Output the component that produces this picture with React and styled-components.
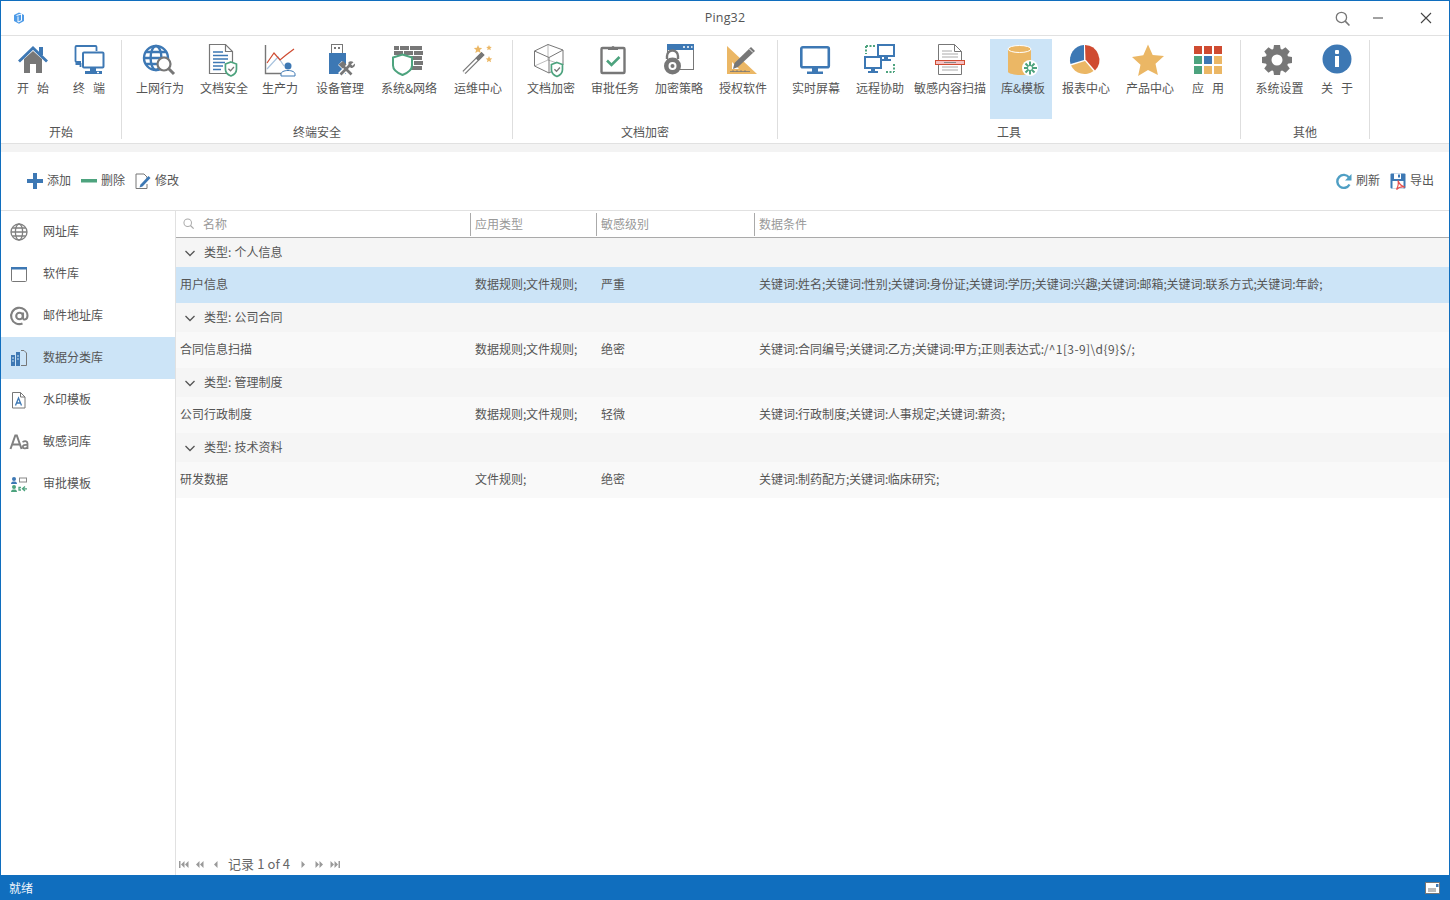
import React from 'react';
import styled, { createGlobalStyle } from 'styled-components';

const BLUE = '#3d78b4', GRAY = '#777', GREEN = '#4da37e', ORANGE = '#ebb765', RED = '#cf4b31';

const Global = createGlobalStyle`
  html, body { margin: 0; padding: 0; background: #fff; }
  body { font-family: "Noto Sans CJK SC", "Liberation Sans", sans-serif; font-size: 12px; color: #555; }
  * { box-sizing: border-box; }
`;

const Win = styled.div`
  width: 1450px; height: 900px; display: flex; flex-direction: column;
  border: 1px solid #106ebe; border-bottom: 0; overflow: hidden; background: #fff;
`;
const TitleBar = styled.header`
  height: 35px; flex: none; display: flex; align-items: center; position: relative;
  border-bottom: 1px solid #e1e1e1; padding-left: 12px;
`;
const Title = styled.div`
  position: absolute; left: 0; right: 0; top: 8px; text-align: center; font-family: "Open Sans", sans-serif;
  font-size: 12.5px; line-height: 17px; color: #555; letter-spacing: .2px;
`;
const WinControls = styled.div`
  margin-left: auto; display: flex; align-items: center; height: 100%;
`;
const WinBtn = styled.button`
  border: 0; background: none; padding: 0; display: flex; align-items: center; justify-content: center;
  width: ${p => p.$w}px; height: 34px; margin-right: ${p => p.$mr}px;
`;
const Ribbon = styled.nav`
  height: 108px; flex: none; display: flex; padding-top: 4px; border-bottom: 1px solid #e1e1e1;
`;
const Group = styled.section`
  width: ${p => p.$w}px; height: 99px; flex: none; display: flex; flex-direction: column;
  border-right: 1px solid #dedede;
`;
const GroupRow = styled.div`
  display: flex; height: 80px; margin-top: -1px; padding-left: ${p => p.$pad}px;
`;
const GroupLabel = styled.div`
  text-align: center; line-height: 16px; margin-top: 5px; color: #555;
`;
const RBtn = styled.button`
  width: ${p => p.$w}px; height: 80px; flex: none; border: 0; padding: 5px 0 0 ${p => p.$pl || 0}px;
  margin-left: ${p => p.$ml || 0}px; background: ${p => (p.$active ? '#cce4f7' : 'transparent')};
  display: flex; flex-direction: column; align-items: center; font: inherit; color: #555;
`;
const RText = styled.span`
  margin-top: 4px; line-height: 16px; white-space: pre;
`;
const Strip = styled.div`
  height: 8px; flex: none; background: #f3f3f3;
`;
const Toolbar = styled.div`
  height: 59px; flex: none; display: flex; align-items: center; padding: 0 15px 0 26px;
  border-bottom: 1px solid #e1e1e1;
`;
const TBtn = styled.button`
  display: flex; align-items: center; gap: 4px; border: 0; background: none; padding: 0; font: inherit; color: #555;
  margin-right: ${p => p.$mr || 0}px; margin-left: ${p => p.$ml || 0};
`;
const TLabel = styled.span`
  margin-top: -3px;
`;
const Main = styled.div`
  flex: 1; display: flex; min-height: 0;
`;
const Side = styled.aside`
  width: 175px; flex: none; border-right: 1px solid #e1e1e1;
`;
const SideItem = styled.div`
  height: 42px; display: flex; align-items: center; background: ${p => (p.$active ? '#cce4f7' : 'transparent')};
`;
const SideIcon = styled.span`
  width: 42px; flex: none; display: flex; justify-content: center; padding-right: 6px;
`;
const SideText = styled.span`
  margin-top: -3px;
`;
const Content = styled.main`
  flex: 1; display: flex; flex-direction: column; min-width: 0;
`;
const cols = 'grid-template-columns: 295px 126px 158px 1fr;';
const Header = styled.div`
  display: grid; ${cols} height: 27px; flex: none; border-bottom: 1px solid #aaa; align-items: center;
`;
const HCell = styled.div`
  height: 23px; display: flex; align-items: center; color: #999; padding-left: ${p => p.$pl || 4}px; gap: 9px;
  border-right: ${p => (p.$last ? 0 : '1px solid #aaa')}; padding-bottom: 2px;
`;
const GroupRowT = styled.div`
  height: 29px; background: #f5f5f5; display: flex; align-items: center; padding-left: 9px; gap: 9px; color: #555;
`;
const GroupText = styled.span`
  margin-top: -2px; word-spacing: .5px;
`;
const Row = styled.div`
  display: grid; ${cols} height: 36px; align-items: center; background: ${p => (p.$sel ? '#cce4f7' : '#f9f9f9')};
`;
const Cell = styled.div`
  padding: 0 0 3px 4px; white-space: nowrap; color: #555;
`;
const Punct = styled.span`
  letter-spacing: -.4px;
`;
const Regex = styled.span`
  letter-spacing: .4px;
`;
const Pager = styled.div`
  margin-top: auto; height: 22px; display: flex; align-items: center; padding-left: 3px; color: #666; flex: none;
  font-size: 13px;
`;
const PagerText = styled.span`
  margin: -2px 11px 0 10px; letter-spacing: .1px;
`;
const PagerGap = styled.span`
  width: ${p => p.$w}px; display: inline-block;
`;
const Status = styled.footer`
  height: 25px; flex: none; background: #106ebe; color: #f2f6fb; display: flex; align-items: center;
  justify-content: space-between; padding: 0 10px 0 9px; margin: 0 -1px;
`;
const StatusText = styled.span`
  margin-top: -1px;
`;
const Svg = styled.svg`
  display: block; flex: none; margin-left: ${p => p.$dx || 0}px; overflow: visible;
`;

const I = ({ s = 32, vb, dx, children }) => (
  <Svg width={s} height={s} viewBox={vb || `0 0 ${s} ${s}`} $dx={dx}>{children}</Svg>
);

const Shield = ({ x, y, k = 1, filled = true }) => (
  <g transform={`translate(${x} ${y}) scale(${k})`}>
    <path d="M7 0.5 13.5 3v6c0 4-3 6.5-6.500 8C3.500 15.500.5 13 .5 9V3z" fill="#fff" stroke={GREEN} strokeWidth="2" />
    {filled && <path d="M4 8.500 6.500 11 10.500 6.500" fill="none" stroke={GRAY} strokeWidth="1.600" />}
  </g>
);

const Globe = ({ c = BLUE, r = 12, cx = 12, cy = 14, w = 2.4 }) => (
  <g fill="none" stroke={c} strokeWidth={w}>
    <circle cx={cx} cy={cy} r={r} />
    <ellipse cx={cx} cy={cy} rx={r * 0.45} ry={r} />
    <path d={`M${cx - r} ${cy}H${cx + r}M${cx - r * 0.85} ${cy - r * 0.5}H${cx + r * 0.85}M${cx - r * 0.85} ${cy + r * 0.5}H${cx + r * 0.85}`} />
  </g>
);

const Gear = () => {
  const teeth = [0, 45, 90, 135, 180, 225, 270, 315];
  return (
    <I dx={-6}>
      {teeth.map(a => (
        <path key={a} d="M13 1h6l1 6h-8z" fill={GRAY} transform={`rotate(${a} 16 16)`} />
      ))}
      <circle cx="16" cy="16" r="8.500" fill="none" stroke={GRAY} strokeWidth="6" />
    </I>
  );
};

const icons = {
  home: (
    <I>
      <path d="M7 15 16 7l9 8v14h-6v-9h-6v9H7z" fill={GRAY} />
      <path d="M2 17.500 16 4l14 13.500" fill="none" stroke={BLUE} strokeWidth="2.800" />
      <rect x="22" y="3" width="4" height="8" fill={BLUE} />
    </I>
  ),
  term: (
    <I>
      <g fill="none" stroke={BLUE} strokeWidth="1.800">
        <path d="M8 18H3.500a1 1 0 0 1-1-1V3a1 1 0 0 1 1-1h19a1 1 0 0 1 1 1v4" />
        <path d="M2.500 20h5v3" />
      </g>
      <rect x="10" y="8.500" width="20.500" height="15" rx="1" fill="#fff" stroke={BLUE} strokeWidth="2" />
      <rect x="17" y="24" width="6" height="3" fill={BLUE} />
      <rect x="12" y="27" width="17" height="3" fill={BLUE} />
      <rect x="24" y="27.800" width="2" height="1.400" fill="#fff" />
    </I>
  ),
  web: (
    <I>
      <Globe />
      <circle cx="20" cy="20" r="6.500" fill="#fff" stroke={GRAY} strokeWidth="2.200" />
      <path d="M24.500 24.500 30 30" stroke={GRAY} strokeWidth="3" />
    </I>
  ),
  docsafe: (
    <I>
      <path d="M1.500.5h16l7 7V29.500h-23z" fill="#fff" stroke={GRAY} strokeWidth="1.200" />
      <path d="M17.500.5v7h7" fill="none" stroke={GRAY} strokeWidth="1.200" />
      <path d="M5 8h10M5 11.500h15M5 15h15M5 18.500h12M5 22h10M5 25.500h8" stroke={BLUE} strokeWidth="1.300" />
      <Shield x={17} y={17.500} k={.85} />
    </I>
  ),
  prod: (
    <I>
      <path d="M1.500 1v28.500h16" fill="none" stroke={GRAY} strokeWidth="1.400" />
      <path d="M3 25 14 13l6 9" fill="none" stroke="#a9c3de" strokeWidth="1.200" />
      <path d="M3 19 10 9l6 7 6-5 8-6" fill="none" stroke={RED} strokeWidth="1.200" />
      <circle cx="24" cy="22" r="3.500" fill={BLUE} />
      <path d="M17 32v-2c0-2 3-3.500 7-3.500S31 28 31 30v2z" fill="#fff" stroke={BLUE} />
    </I>
  ),
  dev: (
    <I>
      <rect x="7.500" y=".5" width="11" height="9" fill="#fff" stroke={GRAY} />
      <rect x="10" y="3" width="2" height="2" fill={GRAY} />
      <rect x="14" y="3" width="2" height="2" fill={GRAY} />
      <rect x="5" y="9" width="17" height="21" fill={BLUE} />
      <path d="M16 19l12 12M28 19 16 31" stroke="#fff" strokeWidth="5.500" />
      <path d="M19 22l8.500 8.500" stroke={GRAY} strokeWidth="2.600" />
      <path d="M14.500 20.500 19 17l3.500 3.500-4 4z" fill={GRAY} />
      <path d="M26 21 16.500 30.500" stroke={GRAY} strokeWidth="2.600" />
      <path d="M24.500 18c2-1 3.500-.8 5 .3l-2.500 2 1.500 1.500 2.300-2.300c.7 2-.5 4.500-3.800 4.500l-2.500-2.500z" fill={GRAY} />
    </I>
  ),
  wall: (
    <I>
      <g fill={GRAY}>
        {[2, 7, 12, 17, 22].map((y, i) => (
          <g key={y}>
            {(i % 2 ? [1, 11, 21] : [1, 7, 17, 24]).map(x => (
              <rect key={x} x={x} y={y} width={i % 2 ? 9 : (x === 1 ? 5 : x === 24 ? 5 : 9)} height="4" />
            ))}
          </g>
        ))}
      </g>
      <g transform="translate(-1 9)">
        <path d="M10.500 1.500 20 4.500v8c0 5-4.500 7.500-9.500 9.500C5.500 20 1 17.500 1 12.500v-8z" fill="#fff" stroke={GREEN} strokeWidth="2" />
      </g>
    </I>
  ),
  wand: (
    <I>
      <path d="M2 28.500 21 9.500" stroke={GRAY} strokeWidth="4.500" />
      <path d="M2 28.500 15 15.500" stroke="#fff" strokeWidth="2" />
      <path d="M15 15.500 21 9.500" stroke={GRAY} strokeWidth="4" />
      <path d="M16 1l1.200 2.800 3 .2-2.300 2 .8 3-2.700-1.600-2.700 1.600.8-3-2.300-2 3-.2zM27 1l.8 1.800 2 .2-1.500 1.300.5 2-1.800-1-1.800 1 .5-2L24.200 3l2-.2zM27 12l1 2.200 2.300.2-1.800 1.500.6 2.300-2.100-1.200-2.100 1.200.6-2.300-1.800-1.500 2.300-.2z" fill={ORANGE} />
    </I>
  ),
  cube: (
    <I dx={-5}>
      <g fill="none" stroke={GRAY} strokeWidth="1">
        <path d="M1.500 7 15 .5 30 6v15L16 29 1.500 22z" />
        <path d="M1.500 7 16 13.500 30 6M16 13.500V29" />
        <path d="M15 .5V16M1.500 22 15 16 30 21" strokeOpacity=".5" />
      </g>
      <Shield x={18} y={18} k={.85} />
    </I>
  ),
  task: (
    <I dx={-2}>
      <rect x="3.500" y="4" width="23" height="25" rx="1" fill="#fff" stroke={GRAY} strokeWidth="2.400" />
      <path d="M10 6V3.500h3.500a1.500 1.500 0 0 1 3 0H20V6z" fill={GRAY} />
      <path d="M9 16.500l4.500 4.500 8-8" fill="none" stroke={GREEN} strokeWidth="2.600" />
    </I>
  ),
  lock: (
    <I>
      <rect x="4.500" y=".5" width="26" height="25" fill="#fff" stroke={GRAY} />
      <rect x="4" y="0" width="27" height="6" fill={BLUE} />
      <path d="M20 3h2M24 3h2M28 3h1.500" stroke="#fff" strokeWidth="1.500" />
      <path d="M4 15v-3a5.500 5.500 0 0 1 11 0v3" fill="none" stroke={GRAY} strokeWidth="2.400" />
      <circle cx="9.500" cy="22" r="8.500" fill={GRAY} />
      <circle cx="9.500" cy="22" r="4" fill="#fff" />
      <circle cx="9.500" cy="22" r="2" fill={GRAY} />
    </I>
  ),
  license: (
    <I>
      <path d="M0 2v28h30z" fill={ORANGE} />
      <path d="M5 18v7h7z" fill="#fff" />
      <path d="M3 27.500h20M6 26v2M10 26v2M14 26v2M18 26v2" stroke={GRAY} strokeWidth=".8" />
      <path d="M6 25l1.500-6L24 3l4 4L11 23z" fill={GRAY} />
      <path d="M22.500 5l3.500 3.500" stroke="#fff" />
    </I>
  ),
  monitor: (
    <I>
      <rect x="1.300" y="3.300" width="27.500" height="20" rx="1.500" fill="none" stroke={BLUE} strokeWidth="2.600" />
      <rect x="12" y="24" width="6" height="4" fill={BLUE} />
      <rect x="7" y="27.500" width="16" height="2.500" fill={BLUE} />
    </I>
  ),
  remote: (
    <I>
      <path d="M2 2v8M2 2h9M30 20v8M22 28h8" stroke={GREEN} strokeWidth="2" strokeDasharray="2 1.500" fill="none" />
      <rect x="14" y="1" width="16" height="11" fill="#fff" stroke={BLUE} strokeWidth="2" />
      <path d="M20 13h4v2h-4zM17 15h10v2H17z" fill={BLUE} />
      <rect x="1" y="13" width="16" height="11" fill="#fff" stroke={BLUE} strokeWidth="2" />
      <path d="M7 25h4v2H7zM4 27h10v2H4z" fill={BLUE} />
    </I>
  ),
  scan: (
    <I>
      <path d="M4.500.5h16l7 7v23h-23z" fill="#fff" stroke={GRAY} />
      <path d="M20.500.5v7h7" fill="none" stroke={GRAY} />
      <path d="M8 7h10M8 10h16M8 13h16M8 23h16M8 26h16" stroke="#aaa" />
      <rect x="1.500" y="16.500" width="29" height="4" fill="#f5bfc0" stroke={RED} />
      <path d="M10 18.500h12" stroke="#888" />
    </I>
  ),
  db: (
    <I>
      <path d="M1 5v23c0 1 5 3 12 3s11-2 11-3V5z" fill={ORANGE} />
      <ellipse cx="12.500" cy="5" rx="11.500" ry="3.500" fill={ORANGE} stroke="#fff" strokeWidth="1" />
      <circle cx="23" cy="24" r="8" fill="#fff" />
      <path d="M23 17.500v13M17 24h13M18.500 19.500l9 9M27.500 19.500l-9 9" stroke={GREEN} strokeWidth="2" />
      <circle cx="23" cy="24" r="2" fill="#fff" />
    </I>
  ),
  pie: (
    <I dx={-2}>
      <path d="M15 1v15L1.500 20A15 15 0 0 1 15 1z" fill={BLUE} />
      <path d="M2 21.500 16 17l8.500 10A15 15 0 0 1 2 21.500z" fill={ORANGE} />
      <path d="M16 1a15 15 0 0 1 10 25.500L16.500 15.500z" fill={RED} />
    </I>
  ),
  star: (
    <I dx={-4}>
      <path d="M16 .5l4.700 10.400 11.300 1.200-8.500 7.600 2.400 11.200L16 26l-9.900 5.900 2.400-11.200L0 13l11.300-1.700z" fill={ORANGE} />
    </I>
  ),
  apps: (
    <I>
      {[[RED, RED, RED], [GREEN, BLUE, ORANGE], [GREEN, ORANGE, ORANGE]].map((r, y) =>
        r.map((c, x) => <rect key={`${x}${y}`} x={2 + x * 10} y={2 + y * 10} width="8" height="8" fill={c} />)
      )}
    </I>
  ),
  info: (
    <I>
      <circle cx="16" cy="15" r="14.500" fill={BLUE} />
      <rect x="14" y="12" width="4" height="11" fill="#fff" />
      <rect x="14" y="6" width="4" height="4" rx="1" fill="#fff" />
    </I>
  ),
};

const ribbon = [
  { w: 121, pad: 4, label: '开始', items: [['home', '开   始', 56], ['term', '终   端', 54, { pl: 2 }]] },
  { w: 391, pad: 4, label: '终端安全', items: [['web', '上网行为', 68], ['docsafe', '文档安全', 60], ['prod', '生产力', 52], ['dev', '设备管理', 68], ['wall', '系统&网络', 70], ['wand', '运维中心', 68]] },
  { w: 265, pad: 6, label: '文档加密', items: [['cube', '文档加密', 64], ['task', '审批任务', 64], ['lock', '加密策略', 64], ['license', '授权软件', 64]] },
  { w: 463, pad: 6, label: '工具', items: [['monitor', '实时屏幕', 64], ['remote', '远程协助', 64], ['scan', '敏感内容扫描', 76], ['db', '库&模板', 62, { active: true, ml: 2, pl: 4 }], ['pie', '报表中心', 66, { ml: 0, pl: 2 }], ['star', '产品中心', 64], ['apps', '应   用', 52]] },
  { w: 129, pad: 7, label: '其他', items: [[null, '系统设置', 63], ['info', '关   于', 52]] },
];

const side = [
  ['网址库', <I s={20}><Globe c="#808080" r={8.000} cx={10} cy={10} w={1.300} /></I>],
  ['软件库', <I s={18}><rect x="1.500" y="2.500" width="15" height="14" rx="1" fill="none" stroke="#777" /><rect x="1" y="2" width="16" height="2.500" fill={BLUE} /></I>],
  ['邮件地址库', <I s={20}><circle cx="10.500" cy="10" r="3.300" fill="none" stroke="#808080" strokeWidth="2.100" /><path d="M14 6.500v5.500c0 2.500 4.500 2 4.500-2.500A8.200 8.200 0 1 0 13.500 17.500" fill="none" stroke="#808080" strokeWidth="2.100" /></I>],
  ['数据分类库', <I s={18}><rect x="1" y="6" width="4" height="11" fill={BLUE} /><rect x="6" y="3" width="4" height="14" fill={BLUE} /><path d="M2 9h2M2 12h2M7 7h2M7 10h2" stroke="#cce4f7" /><path d="M11 1.500h3l2.500 2.500v12.500H11" fill="none" stroke="#777" /></I>, true],
  ['水印模板', <I s={18}><path d="M2.500 1.500h8l4.500 4.500v11h-12.500z" fill="#fff" stroke="#777" /><path d="M10.500 1.500V6H15" fill="none" stroke="#777" /><path d="M5.500 14.500 8.500 7 11.500 14.500M6.500 12h4" fill="none" stroke={BLUE} strokeWidth="1.300" /></I>],
  ['敏感词库', <I s={20}><path d="M1.500 17 6.300 3.500h1.500l4.800 13.500M3.300 12.500h7.500" fill="none" stroke="#808080" strokeWidth="2" /><path d="M13.500 10c3-1.500 5-.8 5 1.500V17M18.500 13c-3-.5-4.700.3-4.700 2s3.200 2 4.700.3" fill="none" stroke="#808080" strokeWidth="1.800" /></I>],
  ['审批模板', <I s={18}><circle cx="4" cy="4" r="2" fill={BLUE} /><path d="M1 9c0-2 1.500-2.500 3-2.500S7 7 7 9z" fill={BLUE} /><rect x="9.500" y="3" width="7" height="4" fill="#fff" stroke="#888" /><circle cx="4" cy="12" r="2" fill={GREEN} /><path d="M1 17c0-2 1.500-2.500 3-2.500S7 15 7 17z" fill={GREEN} /><path d="M11 12.500H9v2.500h2M17 13.800h-3.500M15 11.500l-2.500 2.300 2.500 2.200" fill="none" stroke={GREEN} strokeWidth="1.300" /></I>],
];

const table = [
  ['个人信息', ['用户信息', '数据规则;文件规则;', '严重', '关键词:姓名;关键词:性别;关键词:身份证;关键词:学历;关键词:兴趣;关键词:邮箱;关键词:联系方式;关键词:年龄;'], true],
  ['公司合同', ['合同信息扫描', '数据规则;文件规则;', '绝密', '关键词:合同编号;关键词:乙方;关键词:甲方;正则表达式:/^1[3-9]\\d{9}$/;']],
  ['管理制度', ['公司行政制度', '数据规则;文件规则;', '轻微', '关键词:行政制度;关键词:人事规定;关键词:薪资;']],
  ['技术资料', ['研发数据', '文件规则;', '绝密', '关键词:制药配方;关键词:临床研究;']],
];

const cellText = s =>
  s.split(/(\/\^.*\$\/|[:;])/).map((part, i) => {
    if (part === ':' || part === ';') return <Punct key={i}>{part}</Punct>;
    if (part.startsWith('/^')) return <Regex key={i}>{part}</Regex>;
    return part;
  });

const Chevron = () => (
  <Svg width="10" height="10" viewBox="0 0 10 10"><path d="M.5 3 5 7.500 9.500 3" fill="none" stroke="#555" strokeWidth="1.300" /></Svg>
);
const Search = ({ s = 14, c = '#888', w = 1.300 }) => (
  <Svg width={s} height={s} viewBox="0 0 14 14"><circle cx="6" cy="6" r="4.800" fill="none" stroke={c} strokeWidth={w} /><path d="M9.500 9.500 13.500 13.500" stroke={c} strokeWidth={w + .3} /></Svg>
);
const Nav = ({ w, flip, bars = 0, tri = 1 }) => (
  <Svg width={w} height="7" viewBox={`0 0 ${w} 7`} style={flip ? { transform: 'scaleX(-1)' } : undefined}>
    {bars ? <rect x="0" y="0" width="1.500" height="7" fill="#999" /> : null}
    {Array.from({ length: tri }).map((_, i) => (
      <path key={i} d={`M${(bars ? 2 : 0) + i * 4} 3.500 ${(bars ? 2 : 0) + i * 4 + 3.500} 0v7z`} fill="#999" />
    ))}
  </Svg>
);

export default function App() {
  return (
    <Win>
      <Global />
      <TitleBar>
        <I s={12}>
          <path d="M6 .5 11 3v6l-5 2.700L1 9V3z" fill="#4d9be8" />
          <path d="M3.500 3.500 8.500 2v6.500L5 10V4.500" fill="none" stroke="#fff" strokeWidth="1" />
        </I>
        <Title>Ping32</Title>
        <WinControls>
          <WinBtn $w={16} $mr={16}><Search s={15} c="#777" w={1.200} /></WinBtn>
          <WinBtn $w={24} $mr={22}><Svg width="10" height="2" viewBox="0 0 10 2"><path d="M0 1h10" stroke="#444" /></Svg></WinBtn>
          <WinBtn $w={28} $mr={9}><Svg width="10" height="10" viewBox="0 0 10 10"><path d="M0 0l10 10M10 0 0 10" stroke="#444" strokeWidth="1.100" /></Svg></WinBtn>
        </WinControls>
      </TitleBar>
      <Ribbon>
        {ribbon.map(g => (
          <Group key={g.label} $w={g.w}>
            <GroupRow $pad={g.pad}>
              {g.items.map(([ic, text, w, o = {}]) => (
                <RBtn key={text} $w={w} $active={o.active} $ml={o.ml} $pl={o.pl}>
                  {ic ? icons[ic] : <Gear />}
                  <RText>{text}</RText>
                </RBtn>
              ))}
            </GroupRow>
            <GroupLabel>{g.label}</GroupLabel>
          </Group>
        ))}
      </Ribbon>
      <Strip />
      <Toolbar>
        <TBtn $mr={10}>
          <I s={16}><path d="M6 0h4v6h6v4h-6v6H6v-6H0V6h6z" fill={BLUE} /></I><TLabel>添加</TLabel>
        </TBtn>
        <TBtn $mr={10}>
          <I s={16}><rect y="6" width="16" height="3.500" fill={GREEN} /></I><TLabel>删除</TLabel>
        </TBtn>
        <TBtn>
          <I s={16}><path d="M1 1h8l3 3v3M12 11v4.500H1V1" fill="none" stroke="#777" /><path d="M5.500 11.500 13.500 3l2 2-8 8.500-3 1z" fill={BLUE} /></I><TLabel>修改</TLabel>
        </TBtn>
        <TBtn $ml="auto" $mr={10}>
          <I s={16}><path d="M13.500 11.500a6.500 6.500 0 1 1-.5-7" fill="none" stroke="#4f9fc4" strokeWidth="2.400" /><path d="M15.500 1v6.500H9z" fill="#4f9fc4" /></I><TLabel>刷新</TLabel>
        </TBtn>
        <TBtn>
          <I s={16}><rect x=".5" y=".5" width="15" height="15" rx="1" fill={BLUE} /><rect x="4" y=".5" width="7" height="5.500" fill="#fff" /><rect x="8" y="1.500" width="2" height="3" fill={BLUE} /><rect x="2.500" y="8" width="11" height="7.500" fill="#fff" /><path d="M8 7.500c1 3.500 3 5.500 7 6.500-3.500-.5-6.500.2-8.500 2.500C8 13.500 9 11 8 7.500z" fill="none" stroke="#e6504e" strokeWidth="1.200" /></I><TLabel>导出</TLabel>
        </TBtn>
      </Toolbar>
      <Main>
        <Side>
          {side.map(([t, ic, a]) => (
            <SideItem key={t} $active={a}>
              <SideIcon>{ic}</SideIcon><SideText>{t}</SideText>
            </SideItem>
          ))}
        </Side>
        <Content>
          <Header>
            <HCell $pl={7}><Search s={11} c="#aaa" w={1.300} />名称</HCell>
            <HCell>应用类型</HCell>
            <HCell>敏感级别</HCell>
            <HCell $last>数据条件</HCell>
          </Header>
          {table.map(([g, r, sel]) => (
            <React.Fragment key={g}>
              <GroupRowT><Chevron /><GroupText>类型: {g}</GroupText></GroupRowT>
              <Row $sel={sel}>
                {r.map((c, i) => <Cell key={i}>{cellText(c)}</Cell>)}
              </Row>
            </React.Fragment>
          ))}
          <Pager>
            <Nav w={10} bars={1} tri={2} />
            <PagerGap $w={7} />
            <Nav w={8} tri={2} />
            <PagerGap $w={10} />
            <Nav w={4} />
            <PagerText>记录 1 of 4</PagerText>
            <Nav w={4} flip />
            <PagerGap $w={10} />
            <Nav w={8} tri={2} flip />
            <PagerGap $w={7} />
            <Nav w={10} bars={1} tri={2} flip />
          </Pager>
        </Content>
      </Main>
      <Status>
        <StatusText>就绪</StatusText>
        <Svg width="15" height="12" viewBox="0 0 15 12">
          <rect x=".5" y=".5" width="14" height="11" fill="#fff" stroke="#777" />
          <rect x="11" y="2" width="2.500" height="3" fill={BLUE} />
          <path d="M3 7h8M3 9h8" stroke="#777" />
        </Svg>
      </Status>
    </Win>
  );
}
